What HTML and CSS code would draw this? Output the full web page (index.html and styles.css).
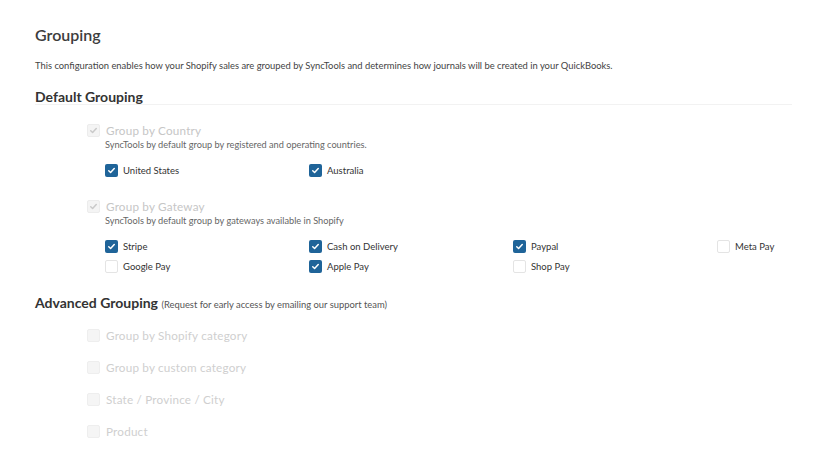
FILE: index.html
```html
<!DOCTYPE html>
<html>
<head>
<meta charset="utf-8">
<link rel="stylesheet" href="styles.css">
</head>
<body>
<div class="page">
  <h1 class="title">Grouping</h1>
  <p class="intro">This configuration enables how your Shopify sales are grouped by SyncTools and determines how journals will be created in your QuickBooks.</p>
  <h2 class="section">Default Grouping</h2>
  <div class="divider"></div>

  <div class="group">
    <div class="group-head">
      <span class="cb cb-disabled-checked"><svg viewBox="0 0 12 12"><path d="M3 6.2l2 2 4-4.4" /></svg></span>
      <span class="group-label">Group by Country</span>
    </div>
    <div class="group-desc">SyncTools by default group by registered and operating countries.</div>
    <div class="options">
      <label class="opt"><span class="cb cb-on"><svg viewBox="0 0 12 12"><path d="M3 6.2l2 2 4-4.4" /></svg></span>United States</label>
      <label class="opt"><span class="cb cb-on"><svg viewBox="0 0 12 12"><path d="M3 6.2l2 2 4-4.4" /></svg></span>Australia</label>
    </div>
  </div>

  <div class="group group-second">
    <div class="group-head">
      <span class="cb cb-disabled-checked"><svg viewBox="0 0 12 12"><path d="M3 6.2l2 2 4-4.4" /></svg></span>
      <span class="group-label">Group by Gateway</span>
    </div>
    <div class="group-desc">SyncTools by default group by gateways available in Shopify</div>
    <div class="options">
      <label class="opt"><span class="cb cb-on"><svg viewBox="0 0 12 12"><path d="M3 6.2l2 2 4-4.4" /></svg></span>Stripe</label>
      <label class="opt"><span class="cb cb-on"><svg viewBox="0 0 12 12"><path d="M3 6.2l2 2 4-4.4" /></svg></span>Cash on Delivery</label>
      <label class="opt"><span class="cb cb-on"><svg viewBox="0 0 12 12"><path d="M3 6.2l2 2 4-4.4" /></svg></span>Paypal</label>
      <label class="opt"><span class="cb cb-off"></span>Meta Pay</label>
      <label class="opt"><span class="cb cb-off"></span>Google Pay</label>
      <label class="opt"><span class="cb cb-on"><svg viewBox="0 0 12 12"><path d="M3 6.2l2 2 4-4.4" /></svg></span>Apple Pay</label>
      <label class="opt"><span class="cb cb-off"></span>Shop Pay</label>
    </div>
  </div>

  <h2 class="section advanced">Advanced Grouping <span class="note">(Request for early access by emailing our support team)</span></h2>

  <div class="adv-list">
    <div class="adv-item"><span class="cb cb-disabled"></span><span class="group-label">Group by Shopify category</span></div>
    <div class="adv-item"><span class="cb cb-disabled"></span><span class="group-label">Group by custom category</span></div>
    <div class="adv-item"><span class="cb cb-disabled"></span><span class="group-label">State / Province / City</span></div>
    <div class="adv-item"><span class="cb cb-disabled"></span><span class="group-label">Product</span></div>
  </div>
</div>
</body>
</html>
```

FILE: styles.css
```css
* { box-sizing: border-box; }
html, body { margin: 0; padding: 0; background: #ffffff; }
body {
  font-family: "Lato", "Noto Sans", sans-serif;
  color: #3a3a3a;
  width: 828px;
  height: 466px;
  overflow: hidden;
}
.page {
  padding: 25px 35px 0 35px;
}
.title {
  margin: 0;
  font-size: 16px;
  font-weight: 600;
  line-height: 20px;
  color: #3d3d3d;
}
.intro {
  margin: 15px 0 0 0;
  font-size: 9.4px;
  line-height: 12px;
  color: #444;
  white-space: nowrap;
}
.section {
  margin: 18px 0 0 0;
  font-size: 14px;
  font-weight: 700;
  line-height: 14px;
  color: #333;
}
.divider {
  height: 1px;
  background: #f2f2f2;
  width: 757px;
}
.group {
  padding-left: 52px;
  margin-top: 18px;
}
.group-second { margin-top: 22px; }
.group-head {
  display: flex;
  align-items: center;
  gap: 6px;
  height: 14px;
}
.group-label {
  font-size: 11.7px;
  line-height: 14px;
  color: #c6c6c6;
  letter-spacing: 0.2px;
  white-space: nowrap;
}
.group-desc {
  margin: 3px 0 0 18px;
  font-size: 9.2px;
  color: #666;
  line-height: 10px;
  white-space: nowrap;
}
.options {
  margin: 14px 0 0 18px;
  display: grid;
  grid-template-columns: 204px 204px 204px auto;
  row-gap: 7px;
}
.opt {
  display: flex;
  align-items: center;
  gap: 5px;
  font-size: 9.5px;
  color: #333;
  height: 13px;
  white-space: nowrap;
}
.cb {
  width: 13px;
  height: 13px;
  border-radius: 2px;
  display: inline-flex;
  align-items: center;
  justify-content: center;
  flex: none;
}
.cb svg { width: 11px; height: 11px; }
.cb svg path { fill: none; stroke-width: 1.6; stroke-linecap: round; stroke-linejoin: round; }
.cb-on { background: #1f6499; }
.cb-on svg path { stroke: #ffffff; }
.cb-off { background: #fff; border: 1px solid #e4e4e4; }
.cb-disabled-checked { background: #f4f4f4; border: 1px solid #ececec; }
.cb-disabled-checked svg path { stroke: #c9c9c9; }
.cb-disabled { background: #f5f5f5; border: 1px solid #eeeeee; }
.advanced {
  margin-top: 23px;
  white-space: nowrap;
}
.note {
  font-size: 9.4px;
  font-weight: 400;
  color: #555;
}
.adv-list {
  padding-left: 52px;
  margin-top: 16px;
  display: flex;
  flex-direction: column;
  gap: 18px;
}
.adv-item {
  display: flex;
  align-items: center;
  gap: 6px;
  height: 14px;
}
.adv-item .group-label { color: #cfcfcf; }
```
